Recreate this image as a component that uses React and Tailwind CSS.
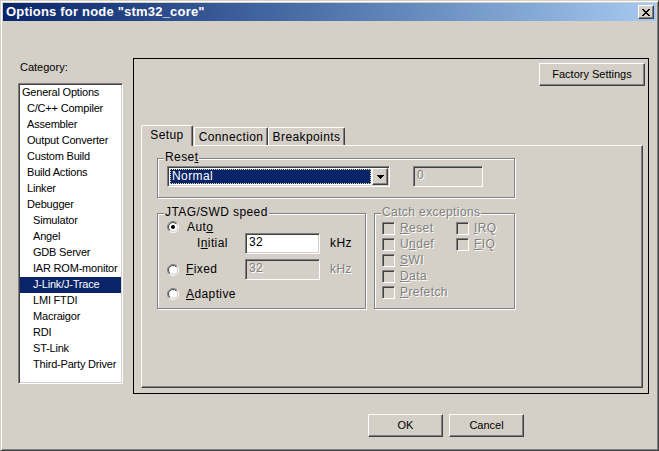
import React from "react";

const dv = "font-['Liberation_Sans',Arial,sans-serif] text-[12px] tracking-[0.4px]";
const raised =
  "bg-[#d4d0c8] border border-t-white border-l-white border-r-[#404040] border-b-[#404040] shadow-[inset_-1px_-1px_0_#808080]";
const sunken =
  "border border-t-[#808080] border-l-[#808080] border-r-white border-b-white shadow-[inset_1px_1px_0_#404040,inset_-1px_-1px_0_#d4d0c8]";
const disabled = "text-[#808080] [text-shadow:1px_1px_0_#fff]";

const items = [
  ["General Options", 0],
  ["C/C++ Compiler", 1],
  ["Assembler", 1],
  ["Output Converter", 1],
  ["Custom Build", 1],
  ["Build Actions", 1],
  ["Linker", 1],
  ["Debugger", 1],
  ["Simulator", 2],
  ["Angel", 2],
  ["GDB Server", 2],
  ["IAR ROM-monitor", 2],
  ["J-Link/J-Trace", 2],
  ["LMI FTDI", 2],
  ["Macraigor", 2],
  ["RDI", 2],
  ["ST-Link", 2],
  ["Third-Party Driver", 2],
];

function Radio({ checked }) {
  return (
    <svg width="12" height="12" viewBox="0 0 12 12" className="shrink-0">
      <defs>
        <linearGradient id="rOut" x1="0" y1="0" x2="1" y2="1">
          <stop offset="0.5" stopColor="#808080" />
          <stop offset="0.5" stopColor="#ffffff" />
        </linearGradient>
        <linearGradient id="rIn" x1="0" y1="0" x2="1" y2="1">
          <stop offset="0.5" stopColor="#404040" />
          <stop offset="0.5" stopColor="#d4d0c8" />
        </linearGradient>
      </defs>
      <circle cx="6" cy="6" r="5.5" fill="none" stroke="url(#rOut)" strokeWidth="1" />
      <circle cx="6" cy="6" r="4.5" fill="#fff" stroke="url(#rIn)" strokeWidth="1" />
      {checked && <circle cx="6" cy="6" r="2" fill="#000" />}
    </svg>
  );
}

function Check({ u, rest, pre = "" }) {
  return (
    <div className="flex items-center h-[13px]">
      <div className={`w-[13px] h-[13px] shrink-0 bg-[#d4d0c8] ${sunken}`} />
      <span className={`ml-[5px] leading-[13px] ${dv} ${disabled}`}>
        {pre}
        <u>{u}</u>
        {rest}
      </span>
    </div>
  );
}

function Group({ label, className, children }) {
  return (
    <div
      className={`relative border border-[#808080] shadow-[inset_1px_1px_0_#fff,1px_1px_0_#fff] ${className}`}
    >
      <span
        className={`absolute left-[6px] -top-[9px] px-[1px] bg-[#d4d0c8] leading-[14px] whitespace-nowrap ${label.cls || ""}`}
      >
        {label.node}
      </span>
      {children}
    </div>
  );
}

export default function App() {
  return (
    <div className="w-[659px] h-[451px] bg-[#d4d0c8] border border-[#d4d0c8] border-r-[#404040] border-b-[#404040] shadow-[inset_1px_1px_0_#fff,inset_-1px_-1px_0_#808080] p-[2px] flex flex-col font-['Liberation_Sans',Arial,sans-serif] text-[11px] text-black overflow-hidden">
      {/* title bar */}
      <div className="flex items-center h-[18px] bg-linear-to-r from-[#0a246a] to-[#a6caf0] pl-[3px] pr-[2px]">
        <span className="text-white font-bold text-[13px] leading-[18px] tracking-[0.2px]">
          Options for node "stm32_core"
        </span>
        <div className={`ml-auto w-[16px] h-[14px] flex items-center justify-center ${raised}`}>
          <svg width="8" height="7" viewBox="0 0 8 7" shapeRendering="crispEdges">
            <path
              fill="#000"
              d="M0 0h2v1H0z M6 0h2v1H6z M1 1h2v1H1z M5 1h2v1H5z M2 2h4v1H2z M3 3h2v1H3z M2 4h4v1H2z M1 5h2v1H1z M5 5h2v1H5z M0 6h2v1H0z M6 6h2v1H6z"
            />
          </svg>
        </div>
      </div>

      {/* body */}
      <div className="flex pt-[37px] pl-[15px]">
        <div className="w-[105px] flex flex-col pt-[3px]">
          <div className="h-[13px] leading-[13px] pl-[2px]">Category:</div>
          <div className={`mt-[9px] h-[301px] bg-white p-[1px] ${sunken}`}>
            {items.map(([name, lvl]) => (
              <div
                key={name}
                className={`h-[16px] leading-[14px] whitespace-nowrap tracking-[-0.2px] ${
                  lvl === 0 ? "pl-[2px]" : lvl === 1 ? "pl-[7px]" : "pl-[13px]"
                } ${name === "J-Link/J-Trace" ? "bg-[#0a246a] text-white" : ""}`}
              >
                {name}
              </div>
            ))}
          </div>
        </div>

        <div className="ml-[10px] w-[516px] h-[336px] border border-black flex flex-col">
          <div className="flex justify-end pr-[3px] pt-[4px]">
            <button className={`w-[106px] h-[23px] flex items-center justify-center ${raised}`}>
              Factory Settings
            </button>
          </div>

          {/* tabs */}
          <div className={`ml-[7px] mt-[39px] flex items-end h-[20px] ${dv}`}>
            <div className="relative z-10 w-[52px] h-[21px] -mb-[1px] bg-[#d4d0c8] border-t border-l border-white border-r border-r-[#404040] rounded-t-[2px] shadow-[inset_-1px_0_0_#808080] flex justify-center pt-[2px] leading-[14px]">
              Setup
            </div>
            <div className="ml-[1px] w-[74px] h-[18px] border-t border-l border-white border-r border-r-[#404040] rounded-t-[2px] shadow-[inset_-1px_0_0_#808080] flex justify-center pt-[2px] leading-[14px]">
              Connection
            </div>
            <div className="w-[77px] h-[18px] border-t border-l border-white border-r border-r-[#404040] rounded-t-[2px] shadow-[inset_-1px_0_0_#808080] flex justify-center pt-[2px] leading-[14px]">
              Breakpoints
            </div>
          </div>

          <div className={`ml-[7px] w-[502px] h-[243px] border border-t-white border-l-white border-r-[#404040] border-b-[#404040] shadow-[inset_-1px_-1px_0_#808080] pl-[15px] pt-[12px] ${dv}`}>
            {/* Reset */}
            <Group
              label={{
                node: (
                  <>
                    Rese<u>t</u>
                  </>
                ),
              }}
              className="w-[358px] h-[40px] flex items-start pl-[9px] pt-[7px]"
            >
              <div className={`w-[223px] h-[21px] bg-white p-[1px] flex ${sunken}`}>
                <div className="flex-1 m-[1px] bg-[#0a246a] border border-dotted border-[#e0dca0] text-white leading-[13px] pl-[1px]">
                  Normal
                </div>
                <div className={`w-[16px] h-[17px] flex items-center justify-center ${raised}`}>
                  <svg width="7" height="4" viewBox="0 0 7 4" shapeRendering="crispEdges">
                    <path fill="#000" d="M0 0h7v1H0z M1 1h5v1H1z M2 2h3v1H2z M3 3h1v1H3z" />
                  </svg>
                </div>
              </div>
              <div className={`ml-[23px] w-[70px] h-[21px] bg-[#d4d0c8] pl-[3px] pt-[2px] leading-[13px] ${sunken} ${disabled}`}>
                0
              </div>
            </Group>

            <div className="flex mt-[15px]">
              {/* JTAG/SWD speed */}
              <Group
                label={{ node: "JTAG/SWD speed" }}
                className="w-[209px] h-[96px] flex flex-col pt-[7px] pl-[9px]"
              >
                <div className="flex items-center h-[12px]">
                  <Radio checked />
                  <span className="ml-[8px] leading-[13px]">
                    Aut<u>o</u>
                  </span>
                </div>
                <div className="flex items-center h-[21px] pl-[30px]">
                  <span className="w-[48px] leading-[13px]">
                    I<u>n</u>itial
                  </span>
                  <div className={`w-[75px] h-[21px] bg-white pl-[3px] pt-[2px] leading-[13px] ${sunken}`}>
                    32
                  </div>
                  <span className="ml-[10px] leading-[13px]">kHz</span>
                </div>
                <div className="flex items-center h-[21px] mt-[5px]">
                  <div className="w-[78px] flex items-center">
                    <Radio />
                    <span className="ml-[7px] leading-[13px]">
                      <u>F</u>ixed
                    </span>
                  </div>
                  <div className={`w-[75px] h-[21px] bg-[#d4d0c8] pl-[3px] pt-[2px] leading-[13px] ${sunken} ${disabled}`}>
                    32
                  </div>
                  <span className={`ml-[10px] leading-[13px] ${disabled}`}>kHz</span>
                </div>
                <div className="flex items-center h-[12px] mt-[8px]">
                  <Radio />
                  <span className="ml-[7px] leading-[13px]">
                    <u>A</u>daptive
                  </span>
                </div>
              </Group>

              {/* Catch exceptions */}
              <Group
                label={{ node: "Catch exceptions", cls: disabled }}
                className="ml-[8px] w-[141px] h-[96px] flex pt-[8px] pl-[7px]"
              >
                <div className="w-[74px] flex flex-col gap-[3px]">
                  <Check u="R" rest="eset" />
                  <Check pre="U" u="n" rest="def" />
                  <Check u="S" rest="WI" />
                  <Check u="D" rest="ata" />
                  <Check u="P" rest="refetch" />
                </div>
                <div className="flex flex-col gap-[3px]">
                  <Check u="I" rest="RQ" />
                  <Check u="F" rest="IQ" />
                </div>
              </Group>
            </div>
          </div>
        </div>
      </div>

      {/* buttons */}
      <div className="flex mt-[20px] pl-[365px]">
        <button className={`w-[75px] h-[23px] flex items-center justify-center ${raised}`}>OK</button>
        <button className={`ml-[6px] w-[75px] h-[23px] flex items-center justify-center ${raised}`}>
          Cancel
        </button>
      </div>
    </div>
  );
}
